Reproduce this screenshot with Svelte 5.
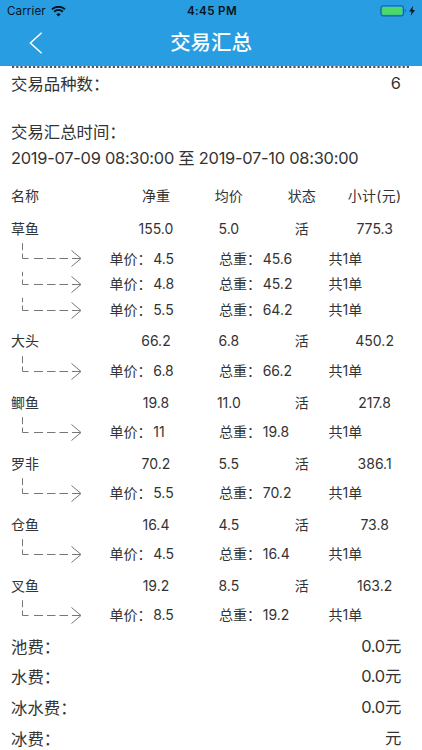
<script>
  const groups = [
    { name: '草鱼', net: '155.0', avg: '5.0', sum: '775.3', subs: [['4.5', '45.6'], ['4.8', '45.2'], ['5.5', '64.2']] },
    { name: '大头', net: '66.2', avg: '6.8', sum: '450.2', subs: [['6.8', '66.2']] },
    { name: '鲫鱼', net: '19.8', avg: '11.0', sum: '217.8', subs: [['11', '19.8']] },
    { name: '罗非', net: '70.2', avg: '5.5', sum: '386.1', subs: [['5.5', '70.2']] },
    { name: '仓鱼', net: '16.4', avg: '4.5', sum: '73.8', subs: [['4.5', '16.4']] },
    { name: '叉鱼', net: '19.2', avg: '8.5', sum: '163.2', subs: [['8.5', '19.2']] },
  ];
  const fees = [['池费', '0.0元'], ['水费', '0.0元'], ['冰水费', '0.0元'], ['冰费', '元']];
</script>

<div class="screen">
  <header>
    <div class="status">
      <div class="left">
        <span>Carrier</span>
        <svg width="15" height="11" viewBox="0 0 15 11">
          <path d="M7.5 10.6 5.3 8.3a3.2 3.2 0 0 1 4.4 0z" fill="#061420" />
          <path d="M3.2 6.4a6.2 6.2 0 0 1 8.6 0M1 4a9.4 9.4 0 0 1 13 0" transform="translate(0 -.6)" fill="none" stroke="#061420" stroke-width="2" />
        </svg>
      </div>
      <div class="time">4:45 PM</div>
      <div class="right">
        <svg width="37" height="12" viewBox="0 0 37 12">
          <rect x=".9" y=".7" width="22.6" height="10.2" rx="2.4" fill="none" stroke="#17699a" stroke-width="1.1" />
          <rect x="2.1" y="1.9" width="20.2" height="7.8" rx="1.3" fill="#4cd964" />
          <path d="M24.8 4v3.6q1.2-.6 1.2-1.8T24.8 4z" fill="#17699a" />
          <path d="M33.1.8 29.2 6.4h2.5l-1 4.4 4.3-5.8h-2.6z" fill="#061420" />
        </svg>
      </div>
    </div>
    <div class="nav">
      <svg width="14" height="22" viewBox="0 0 14 22"><path d="M12.6.8 1.4 11l11.2 10.2" fill="none" stroke="#fff" stroke-width="1.5" /></svg>
      <h1>交易汇总</h1>
    </div>
  </header>

  <main>
    <svg class="dots" width="398" height="2"><line x1="0" y1="1" x2="398" y2="1" stroke="#4c5560" stroke-width="2" stroke-dasharray="2.2 2" /></svg>
    <div class="count"><span>交易品种数<i>：</i></span><span>6</span></div>
    <div class="range">
      <div>交易汇总时间<i>：</i></div>
      <div class="dates">2019-07-09 08:30:00 至 2019-07-10 08:30:00</div>
    </div>
    <div class="row head"><span>名称</span><span>净重</span><span>均价</span><span>状态</span><span>小计(元)</span></div>
    {#each groups as g}
      <div class="row"><span>{g.name}</span><span>{g.net}</span><span>{g.avg}</span><span>活</span><span>{g.sum}</span></div>
      {#each g.subs as s, i}
        <div class="sub">
          <svg width="62" height="26" viewBox="0 0 62 26">
            <g fill="none" stroke="#777" stroke-width="1">
              <path d={i === 0 ? 'M1.5-1.8V5.2' : 'M1.5.8V5.2'} />
              <path d="M1.5 8.5V13.5H7.5M13 13.5h9M26 13.5h8.5M38.5 13.5h8.5M51 13.5h8.5" />
              <path d="M50.5 5.5l9.5 8-9.5 8" />
            </g>
          </svg>
          <span class="price">单价<i>：</i>{s[0]}</span>
          <span class="weight">总重<i>：</i>{s[1]}</span>
          <span>共1单</span>
        </div>
      {/each}
    {/each}
    <div class="fees">
      {#each fees as f}
        <div class="fee"><span>{f[0]}<i>：</i></span><span>{f[1]}</span></div>
      {/each}
    </div>
  </main>
</div>

<style>
  .screen {
    width: 422px;
    height: 750px;
    overflow: hidden;
    background: #fff;
    color: #333;
    font-family: Inter, 'Noto Sans CJK SC', sans-serif;
    font-weight: 400;
  }
  i { font-style: normal; font-family: 'Noto Sans CJK SC', sans-serif; }
  header { height: 66px; background: #289de2; }
  .status {
    height: 22px;
    display: grid;
    grid-template-columns: 1fr auto 1fr;
    align-items: center;
    padding: 0 5px 0 7px;
    color: #061420;
    font-size: 11.6px;
  }
  .left { display: flex; align-items: center; gap: 5px; letter-spacing: .1px; }
  .time { font-weight: 600; letter-spacing: .35px; }
  .right { display: flex; justify-content: flex-end; }
  .nav { height: 44px; display: grid; grid-template-columns: 60px 1fr 60px; align-items: center; }
  .nav svg { margin-left: 29px; margin-top: -2px; }
  h1 { margin: 0; text-align: center; color: #fff; font-size: 20.4px; font-weight: 500; line-height: 40px; margin-top: -2px; }
  main { padding: 0 11px; }
  .dots { display: block; margin-left: 1px; }
  .count { display: flex; justify-content: space-between; height: 32px; line-height: 30px; font-size: 16.4px; padding-right: 10px; }
  .range { font-size: 16.4px; line-height: 25.5px; padding-top: 19px; }
  .dates { letter-spacing: -.25px; }
  .row {
    display: grid;
    grid-template-columns: 108.5px repeat(4, 72.9px);
    height: 35.5px;
    line-height: 38.5px;
    font-size: 14px;
    text-align: center;
    white-space: nowrap;
  }
  .row span:first-child { text-align: left; }
  .head { height: 39.2px; line-height: 50px; }
  .head span:last-child { letter-spacing: .3px; }
  .sub { display: flex; align-items: center; height: 25.6px; line-height: 25.6px; font-size: 14px; padding-left: 9.5px; white-space: nowrap; }
  .sub svg { overflow: visible; margin-right: 27px; flex: none; }
  .sub i { margin-right: 1.7px; }
  .price { width: 109.5px; }
  .weight { width: 109.5px; }
  .fees { padding-top: 2.8px; }
  .fee { display: flex; justify-content: space-between; height: 30.6px; line-height: 30.6px; font-size: 16.4px; padding-right: 10px; }
  .fee span:last-child { letter-spacing: -.3px; }
</style>
